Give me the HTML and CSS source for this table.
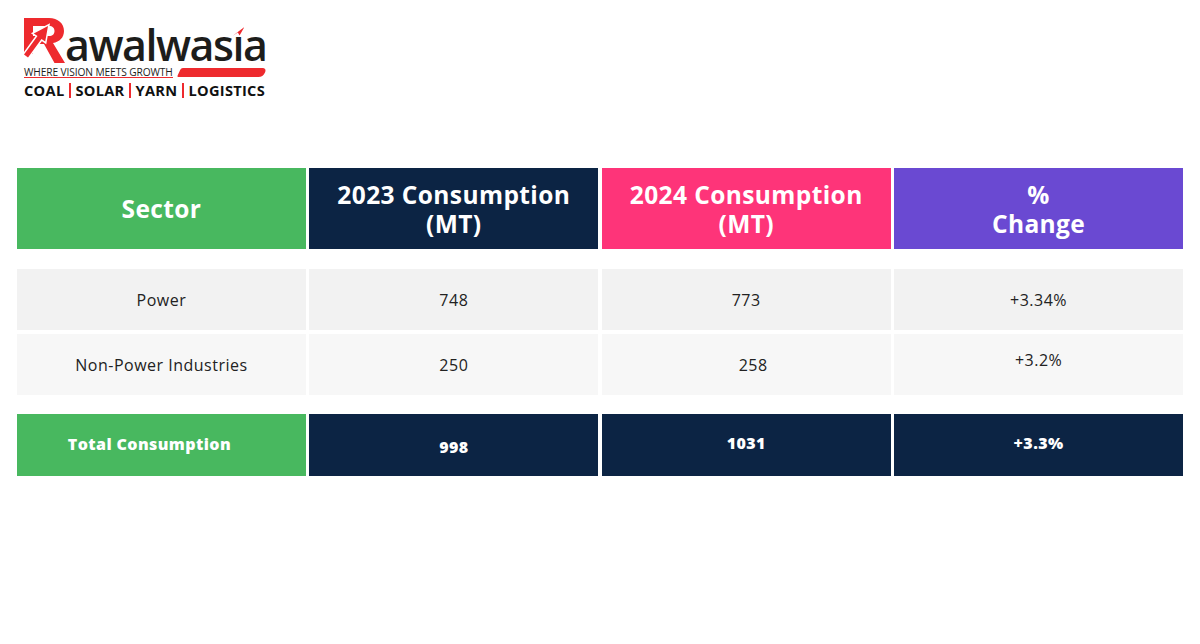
FILE: index.html
```html
<!DOCTYPE html>
<html lang="en">
<head>
<meta charset="utf-8">
<title>Coal Consumption</title>
<link rel="stylesheet" href="styles.css">
</head>
<body>
<header class="brand">
  <div class="brand-top">
    <svg class="brand-r" viewBox="0 0 42 46" width="42" height="46" aria-hidden="true">
      <path fill="#ee2a2e" fill-rule="evenodd" d="M0 0 H25 C34 0 40 5.5 40 13 C40 19.5 35.5 24 29 25 L41 45 H30.5 L20 26 H9 V36 H0 Z M9 8 H25 C28.5 8 30.5 10 30.5 13 C30.5 16 28.5 18 25 18 H9 Z"/>
      <polygon fill="#ee2a2e" stroke="#fff" stroke-width="3" stroke-linejoin="miter" paint-order="stroke" points="0,36.5 13.5,18 9.8,15.4 24,8 21.2,23.6 17.5,21 4,39.5"/>
    </svg>
    <span class="brand-name">awalwas<span class="brand-i">ı</span>a</span>
  </div>
  <div class="brand-tag">
    <span class="tag-text">WHERE VISION MEETS GROWTH</span>
    <span class="tag-bar"></span>
  </div>
  <div class="brand-lines">COAL<span class="sep"></span>SOLAR<span class="sep"></span>YARN<span class="sep"></span>LOGISTICS</div>
</header>

<main class="table">
  <div class="row head">
    <div class="cell green">Sector</div>
    <div class="cell navy">2023 Consumption<br>(MT)</div>
    <div class="cell pink">2024 Consumption<br>(MT)</div>
    <div class="cell purple">%<br>Change</div>
  </div>
  <div class="row body odd">
    <div class="cell">Power</div>
    <div class="cell">748</div>
    <div class="cell">773</div>
    <div class="cell">+3.34%</div>
  </div>
  <div class="row body even">
    <div class="cell">Non-Power Industries</div>
    <div class="cell">250</div>
    <div class="cell shift-right">258</div>
    <div class="cell raise">+3.2%</div>
  </div>
  <div class="row total">
    <div class="cell green label">Total Consumption</div>
    <div class="cell navy lower">998</div>
    <div class="cell navy raise-sm">1031</div>
    <div class="cell navy raise-sm">+3.3%</div>
  </div>
</main>
</body>
</html>
```

FILE: styles.css
```css
*, *::before, *::after {
  box-sizing: border-box;
}

html, body {
  margin: 0;
  padding: 0;
  background: #ffffff;
}

body {
  width: 1200px;
  height: 644px;
  overflow: hidden;
  font-family: "Open Sans", "Liberation Sans", sans-serif;
  color: #222222;
}

/* ---------- brand ---------- */
.brand {
  padding: 18px 0 0 24px;
  width: 300px;
}

.brand-top {
  display: flex;
  align-items: flex-end;
  height: 46px;
}

.brand-r {
  display: block;
  flex: none;
}

.brand-name {
  font-size: 43px;
  font-weight: 600;
  line-height: 44px;
  letter-spacing: -1.5px;
  color: #1d1d1b;
  margin-left: -1px;
  margin-bottom: -3px;
}

.brand-i {
  position: relative;
}

.brand-i::after {
  content: "";
  position: absolute;
  left: 0;
  top: 12px;
  width: 12px;
  height: 9px;
  background: #ee2a2e;
  clip-path: polygon(0 100%, 100% 0, 60% 95%, 45% 62%);
}

.brand-tag {
  display: flex;
  align-items: center;
  margin-top: 3px;
  height: 11px;
}

.tag-text {
  font-size: 10.2px;
  font-weight: 500;
  letter-spacing: -0.1px;
  line-height: 10px;
  color: #1d1d1b;
  border-bottom: 1px solid #ee2a2e;
  white-space: nowrap;
}

.tag-bar {
  flex: none;
  width: 86px;
  height: 9px;
  margin-left: 6px;
  background: #ee2a2e;
  border-radius: 2px 5px 5px 2px;
  transform: skewX(-25deg);
}

.brand-lines {
  margin-top: 4px;
  font-size: 14.6px;
  font-weight: 700;
  line-height: 16px;
  letter-spacing: 0.3px;
  color: #111111;
  white-space: nowrap;
  display: flex;
  align-items: center;
}

.sep {
  display: block;
  flex: none;
  width: 2px;
  height: 15px;
  background: #ee2a2e;
  margin: 0 4.5px;
}

/* ---------- table ---------- */
.table {
  margin: 70px 0 0 17px;
  width: 1166px;
  display: flex;
  flex-direction: column;
}

.row {
  display: grid;
  grid-template-columns: repeat(4, 1fr);
  column-gap: 3.5px;
}

.cell {
  display: flex;
  align-items: center;
  justify-content: center;
  text-align: center;
}

.head .cell {
  height: 81px;
  color: #ffffff;
  font-size: 24.5px;
  font-weight: 700;
  line-height: 29px;
  letter-spacing: 0.4px;
  padding-top: 1px;
}

.head .cell.green {
  padding-bottom: 2px;
}

.body {
  margin-top: 4px;
}

.head + .body {
  margin-top: 20px;
}

.body .cell {
  height: 61px;
  font-size: 16px;
  font-weight: 400;
  color: #222222;
  letter-spacing: 0.5px;
}

.odd .cell { background: #f2f2f2; }
.even .cell { background: #f7f7f7; }

.shift-right { padding-left: 14px; }
.raise { padding-bottom: 10px; }

.total {
  margin-top: 19px;
}

.total .cell {
  height: 62px;
  color: #ffffff;
  font-size: 16px;
  font-weight: 800;
  letter-spacing: 0.4px;
}

.total .cell.label {
  padding-bottom: 2px;
  padding-right: 24px;
}

.lower { padding-top: 4px; }
.raise-sm { padding-bottom: 4px; }

.green { background: #48b85f; }
.navy { background: #0c2444; }
.pink { background: #fe3479; }
.purple { background: #6a49d2; }
```
